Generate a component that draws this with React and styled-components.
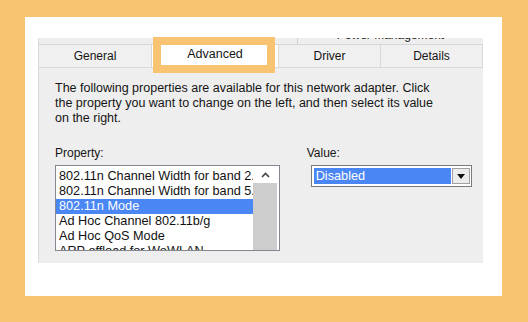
import React from 'react'
import styled, { createGlobalStyle } from 'styled-components'

const GlobalStyle = createGlobalStyle`
  html, body {
    margin: 0;
    background: #f8c471;
    font-family: "Liberation Sans", Arial, sans-serif;
  }
`

const Frame = styled.div`
  width: 528px;
  height: 322px;
  box-sizing: border-box;
  padding: 17px 26px 26px 25px;
`

const Card = styled.div`
  width: 477px;
  height: 279px;
  box-sizing: border-box;
  background: #ffffff;
  padding: 21px 19px 33px 13px;
`

const Panel = styled.div`
  position: relative;
  height: 100%;
  background: #eeeeee;
  border-left: 1px solid #dadada;
  box-sizing: border-box;
  font-size: 12px;
  color: #151515;
`

const BackRow = styled.div`
  display: flex;
  height: 6px;
  overflow: hidden;
  border-bottom: 1px solid #d6d6d6;
`

const BackTab = styled.div`
  flex: ${p => (p.grow ? 1 : 'none')};
  width: ${p => (p.w ? `${p.w}px` : 'auto')};
  border-right: ${p => (p.edge ? '1px solid #d0d0d0' : 'none')};
  text-align: center;
  line-height: 12px;
  margin-top: -9px;
  color: #222;
`

const TabRow = styled.div`
  display: flex;
  height: 22px;
  border-bottom: 1px solid #d9d9d9;
  background: #f0f0f0;
`

const Tab = styled.div`
  width: ${p => p.w}px;
  box-sizing: border-box;
  border-right: 1px solid #d9d9d9;
  background: ${p => (p.active ? '#ffffff' : '#f0f0f0')};
  text-align: center;
  line-height: ${p => (p.active ? '18px' : '22px')};
  font-size: ${p => (p.active ? '12.5px' : '12px')};
`

const Highlight = styled.div`
  position: absolute;
  left: 114px;
  top: -1px;
  width: 122px;
  height: 36px;
  box-sizing: border-box;
  border: 8px solid #f8c471;
  pointer-events: none;
`

const Body = styled.div`
  padding: 13px 0 0 16px;
`

const Description = styled.p`
  margin: 0;
  width: 390px;
  font-size: 12.5px;
  line-height: 15px;
`

const Columns = styled.div`
  display: flex;
  margin-top: 20px;
`

const Column = styled.div`
  width: ${p => p.w}px;
`

const Label = styled.div`
  line-height: 15px;
  margin-bottom: ${p => p.gap}px;
`

const ListBox = styled.div`
  display: flex;
  width: 225px;
  height: 86px;
  box-sizing: border-box;
  border: 1px solid #828790;
  background: #ffffff;
  overflow: hidden;
`

const Items = styled.div`
  flex: 1;
  padding-top: 3px;
  overflow: hidden;
`

const Item = styled.div`
  height: 15px;
  line-height: 15px;
  padding-left: 3px;
  white-space: nowrap;
  overflow: hidden;
  font-size: 12.7px;
  background: ${p => (p.selected ? '#4a86f4' : 'transparent')};
  color: ${p => (p.selected ? '#ffffff' : '#111111')};
`

const ScrollBar = styled.div`
  width: 24px;
  margin-right: 2px;
  display: flex;
  flex-direction: column;
`

const ScrollArrow = styled.div`
  height: 17px;
  display: flex;
  align-items: center;
  justify-content: center;
  background: #ffffff;
`

const Thumb = styled.div`
  flex: 1;
  background: #cdcdcd;
`

const Combo = styled.div`
  display: flex;
  width: 161px;
  height: 22px;
  margin-left: 4px;
  box-sizing: border-box;
  border: 1px solid #7a7a7a;
  background: #ffffff;
  padding: 2px 1px 2px 2px;
`

const ComboValue = styled.div`
  flex: 1;
  background: #4a86f4;
  color: #ffffff;
  font-size: 12.7px;
  line-height: 16px;
  padding-left: 2px;
`

const ComboButton = styled.div`
  width: 18px;
  margin-left: 1px;
  box-sizing: border-box;
  border: 1px solid #a0a0a0;
  background: #ececec;
  display: flex;
  align-items: center;
  justify-content: center;
`

const UpArrow = () => (
  <svg width="9" height="6" viewBox="0 0 9 6">
    <path d="M1 5 L4.5 1.5 L8 5" fill="none" stroke="#444" strokeWidth="1.6" />
  </svg>
)

const DownArrow = () => (
  <svg width="8" height="5" viewBox="0 0 8 5">
    <path d="M0 0 H8 L4 5 Z" fill="#111" />
  </svg>
)

const properties = [
  '802.11n Channel Width for band 2.4GHz',
  '802.11n Channel Width for band 5.2GHz',
  '802.11n Mode',
  'Ad Hoc Channel 802.11b/g',
  'Ad Hoc QoS Mode',
  'ARP offload for WoWLAN'
]

const App = () => (
  <Frame>
    <GlobalStyle />
    <Card>
      <Panel>
        <BackRow>
          <BackTab w={258} edge />
          <BackTab grow>Power Management</BackTab>
        </BackRow>
        <TabRow>
          <Tab w={113}>General</Tab>
          <Tab w={127} active>Advanced</Tab>
          <Tab w={102}>Driver</Tab>
          <Tab w={102}>Details</Tab>
        </TabRow>
        <Highlight />
        <Body>
          <Description>
            The following properties are available for this network adapter. Click
            the property you want to change on the left, and then select its value
            on the right.
          </Description>
          <Columns>
            <Column w={257}>
              <Label gap={4}>Property:</Label>
              <ListBox>
                <Items>
                  {properties.map((p, i) => (
                    <Item key={p} selected={i === 2}>{p}</Item>
                  ))}
                </Items>
                <ScrollBar>
                  <ScrollArrow><UpArrow /></ScrollArrow>
                  <Thumb />
                </ScrollBar>
              </ListBox>
            </Column>
            <Column w={180}>
              <Label gap={4}>Value:</Label>
              <Combo>
                <ComboValue>Disabled</ComboValue>
                <ComboButton><DownArrow /></ComboButton>
              </Combo>
            </Column>
          </Columns>
        </Body>
      </Panel>
    </Card>
  </Frame>
)

export default App
